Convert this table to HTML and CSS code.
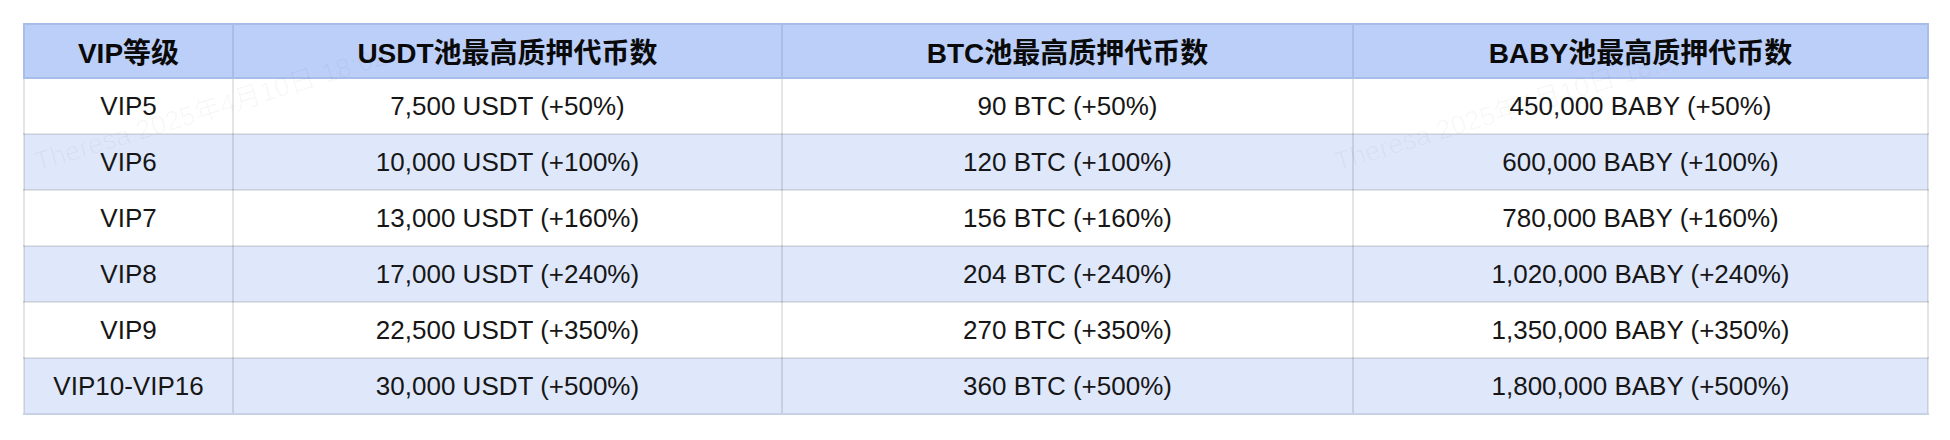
FILE: index.html
```html
<!DOCTYPE html>
<html lang="zh-CN">
<head>
<meta charset="utf-8">
<title>VIP</title>
<link rel="stylesheet" href="styles.css">
</head>
<body>
<div class="wrap">
  <table class="vip">
    <colgroup>
      <col class="c1"><col class="c2"><col class="c3"><col class="c4">
    </colgroup>
    <thead>
      <tr><th>VIP等级</th><th>USDT池最高质押代币数</th><th>BTC池最高质押代币数</th><th>BABY池最高质押代币数</th></tr>
    </thead>
    <tbody>
      <tr><td>VIP5</td><td>7,500 USDT (+50%)</td><td>90 BTC (+50%)</td><td>450,000 BABY (+50%)</td></tr>
      <tr><td>VIP6</td><td>10,000 USDT (+100%)</td><td>120 BTC (+100%)</td><td>600,000 BABY (+100%)</td></tr>
      <tr><td>VIP7</td><td>13,000 USDT (+160%)</td><td>156 BTC (+160%)</td><td>780,000 BABY (+160%)</td></tr>
      <tr><td>VIP8</td><td>17,000 USDT (+240%)</td><td>204 BTC (+240%)</td><td>1,020,000 BABY (+240%)</td></tr>
      <tr><td>VIP9</td><td>22,500 USDT (+350%)</td><td>270 BTC (+350%)</td><td>1,350,000 BABY (+350%)</td></tr>
      <tr><td>VIP10-VIP16</td><td>30,000 USDT (+500%)</td><td>360 BTC (+500%)</td><td>1,800,000 BABY (+500%)</td></tr>
    </tbody>
  </table>
  <div class="wm wm1">Theresa 2025年4月10日 18:02</div>
  <div class="wm wm2">Theresa 2025年4月10日 18:02</div>
</div>
</body>
</html>
```
FILE: styles.css
```css
html, body {
  margin: 0;
  padding: 0;
  background: #fff;
}
body {
  font-family: "Liberation Sans", Arial, "Noto Sans CJK SC", sans-serif;
  color: #111;
}
.wrap {
  position: relative;
  padding: 23px 24px 0 23px;
  overflow: hidden;
  height: 417px;
}
.vip {
  border-collapse: collapse;
  table-layout: fixed;
  width: 1904px;
}
.c1 { width: 209px; }
.c2 { width: 549px; }
.c3 { width: 571px; }
.c4 { width: 575px; }
.vip th, .vip td {
  text-align: center;
  vertical-align: middle;
  padding: 0;
  white-space: nowrap;
}
.vip th {
  height: 52px;
  background: #bccff8;
  border: 2px solid #a9bde9;
  font-size: 28px;
  font-weight: bold;
  color: #0a0a0a;
}
.vip td {
  height: 54px;
  border: 2px solid rgba(0, 0, 0, 0.1);
  font-size: 26px;
  color: #161616;
}
.vip tbody tr:nth-child(even) td {
  background: #dfe7fb;
}
.vip tbody tr:last-child td {
  border-bottom-color: #c9d1e6;
}
.wm {
  position: absolute;
  pointer-events: none;
  font-size: 27px;
  color: rgba(0, 0, 0, 0.03);
  transform: rotate(-17deg);
  transform-origin: left bottom;
  white-space: nowrap;
}
.wm1 { left: 40px; top: 140px; }
.wm2 { left: 1340px; top: 140px; }
```
